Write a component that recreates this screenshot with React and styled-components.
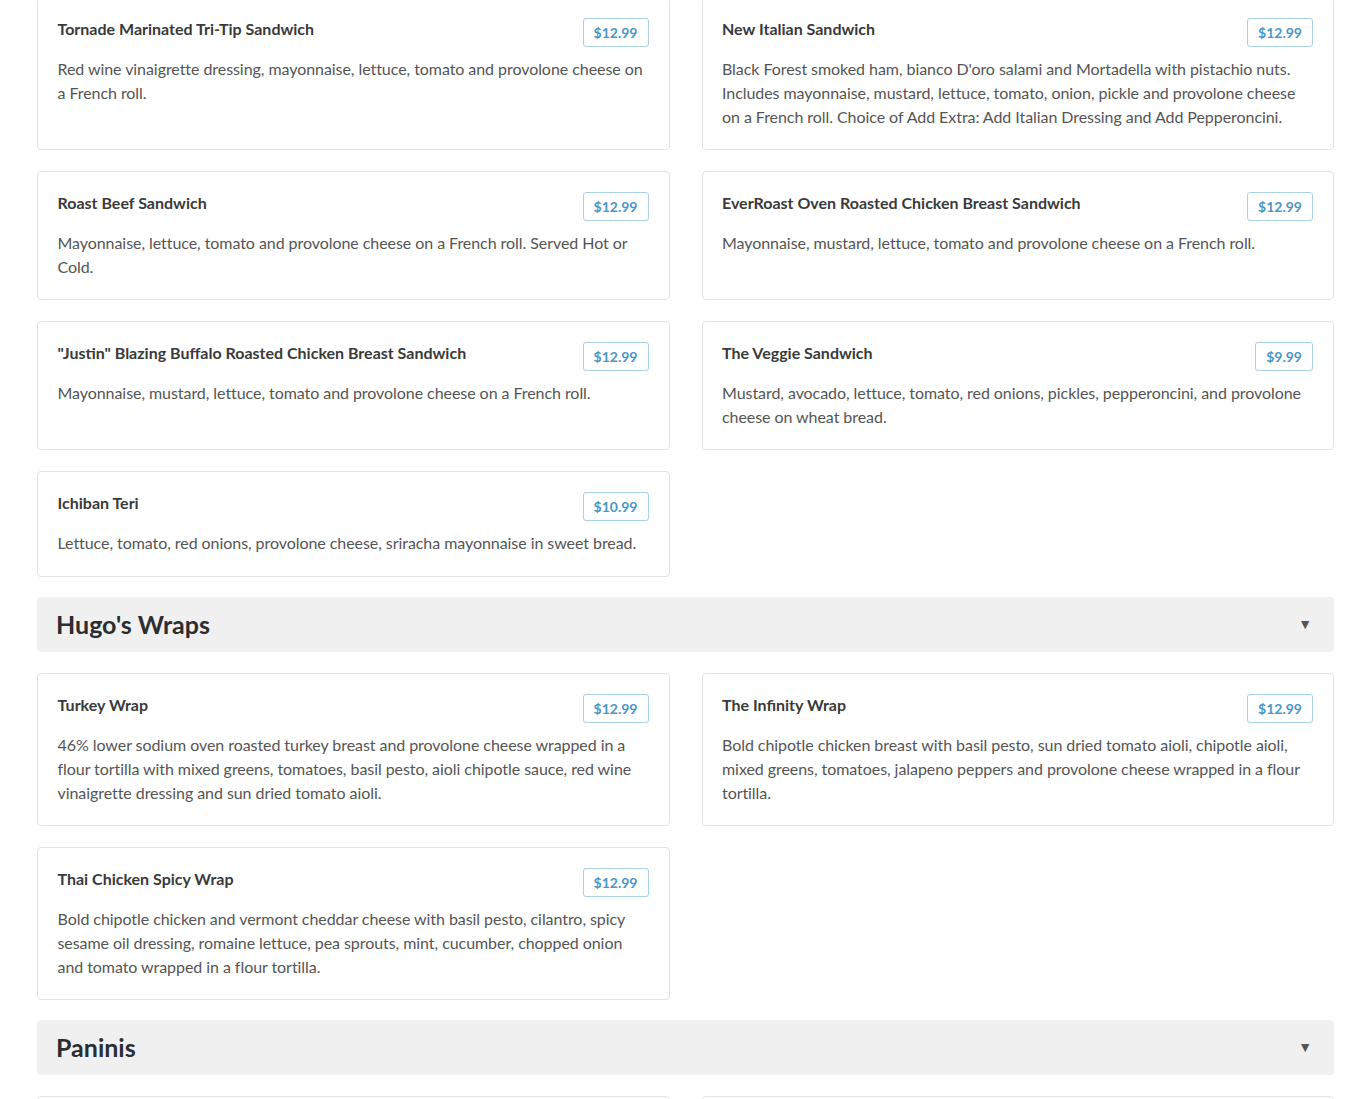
import styled, { createGlobalStyle } from "styled-components";

const GlobalStyle = createGlobalStyle`
	body {
		margin: 0;
		background: #fff;
		font-family: Lato, "Open Sans", sans-serif;
		color: #333;
	}
`;

const sections = [
	{
		items: [
			{
				name: "Tornade Marinated Tri-Tip Sandwich",
				price: "$12.99",
				desc: "Red wine vinaigrette dressing, mayonnaise, lettuce, tomato and provolone cheese on a French roll.",
			},
			{
				name: "New Italian Sandwich",
				price: "$12.99",
				desc: "Black Forest smoked ham, bianco D'oro salami and Mortadella with pistachio nuts. Includes mayonnaise, mustard, lettuce, tomato, onion, pickle and provolone cheese on a French roll. Choice of Add Extra: Add Italian Dressing and Add Pepperoncini.",
			},
			{
				name: "Roast Beef Sandwich",
				price: "$12.99",
				desc: "Mayonnaise, lettuce, tomato and provolone cheese on a French roll. Served Hot or Cold.",
			},
			{
				name: "EverRoast Oven Roasted Chicken Breast Sandwich",
				price: "$12.99",
				desc: "Mayonnaise, mustard, lettuce, tomato and provolone cheese on a French roll.",
			},
			{
				name: "\"Justin\" Blazing Buffalo Roasted Chicken Breast Sandwich",
				price: "$12.99",
				desc: "Mayonnaise, mustard, lettuce, tomato and provolone cheese on a French roll.",
			},
			{
				name: "The Veggie Sandwich",
				price: "$9.99",
				desc: "Mustard, avocado, lettuce, tomato, red onions, pickles, pepperoncini, and provolone cheese on wheat bread.",
			},
			{
				name: "Ichiban Teri",
				price: "$10.99",
				desc: "Lettuce, tomato, red onions, provolone cheese, sriracha mayonnaise in sweet bread.",
			},
		],
	},
	{
		title: "Hugo's Wraps",
		items: [
			{
				name: "Turkey Wrap",
				price: "$12.99",
				desc: "46% lower sodium oven roasted turkey breast and provolone cheese wrapped in a flour tortilla with mixed greens, tomatoes, basil pesto, aioli chipotle sauce, red wine vinaigrette dressing and sun dried tomato aioli.",
			},
			{
				name: "The Infinity Wrap",
				price: "$12.99",
				desc: "Bold chipotle chicken breast with basil pesto, sun dried tomato aioli, chipotle aioli, mixed greens, tomatoes, jalapeno peppers and provolone cheese wrapped in a flour tortilla.",
			},
			{
				name: "Thai Chicken Spicy Wrap",
				price: "$12.99",
				desc: "Bold chipotle chicken and vermont cheddar cheese with basil pesto, cilantro, spicy sesame oil dressing, romaine lettuce, pea sprouts, mint, cucumber, chopped onion and tomato wrapped in a flour tortilla.",
			},
		],
	},
	{
		title: "Paninis",
		items: [
			{ name: "", price: "", desc: "" },
			{ name: "", price: "", desc: "" },
		],
	},
];

const App = () => (
	<>
		<GlobalStyle />
		<Page>
			{sections.map((section, i) => (
				<Section key={i}>
					{section.title && (
						<SectionHeader>
							<SectionTitle>{section.title}</SectionTitle>
							<Caret>▼</Caret>
						</SectionHeader>
					)}
					<Grid>
						{section.items.map((item, j) => (
							<Card key={j}>
								<CardHead>
									<ItemName>{item.name}</ItemName>
									{item.price && <Price>{item.price}</Price>}
								</CardHead>
								<ItemDesc>{item.desc}</ItemDesc>
							</Card>
						))}
					</Grid>
				</Section>
			))}
		</Page>
	</>
);

export default App;

const Page = styled.div`
	margin-top: -3px;
	padding: 0 36px 40px 37px;
	display: flex;
	flex-direction: column;
	gap: 20px;
`;

const Section = styled.section`
	display: flex;
	flex-direction: column;
	gap: 21px;
`;

const SectionHeader = styled.div`
	display: flex;
	align-items: center;
	justify-content: space-between;
	height: 55px;
	padding: 0 20px 2px 19px;
	box-sizing: border-box;
	background: #f0f0f0;
	border-radius: 4px;
`;

const SectionTitle = styled.h2`
	margin: 0;
	font-size: 25px;
	font-weight: 700;
	color: #2b2d30;
`;

const Caret = styled.span`
	font-size: 14px;
	color: #555;
	margin-right: 2px;
`;

const Grid = styled.div`
	display: grid;
	grid-template-columns: 1fr 1fr;
	column-gap: 32px;
	row-gap: 21px;
`;

const Card = styled.div`
	border: 1px solid #e3e3e3;
	border-radius: 4px;
	padding: 20px 20px 20px 19.5px;
	min-height: 64px;
`;

const CardHead = styled.div`
	display: flex;
	justify-content: space-between;
	align-items: flex-start;
	gap: 16px;
	margin-bottom: 10px;
`;

const ItemName = styled.h3`
	margin: 0;
	font-size: 16px;
	line-height: 22px;
	font-weight: 700;
	color: #3a3a3a;
`;

const Price = styled.span`
	flex-shrink: 0;
	border: 1px solid #a9d0e3;
	border-radius: 3px;
	padding: 0 10px;
	height: 27px;
	line-height: 27px;
	font-size: 14px;
	font-weight: 700;
	color: #4a98c6;
`;

const ItemDesc = styled.p`
	margin: 0;
	font-size: 16px;
	line-height: 24px;
	letter-spacing: -0.06px;
	color: #555;
`;
